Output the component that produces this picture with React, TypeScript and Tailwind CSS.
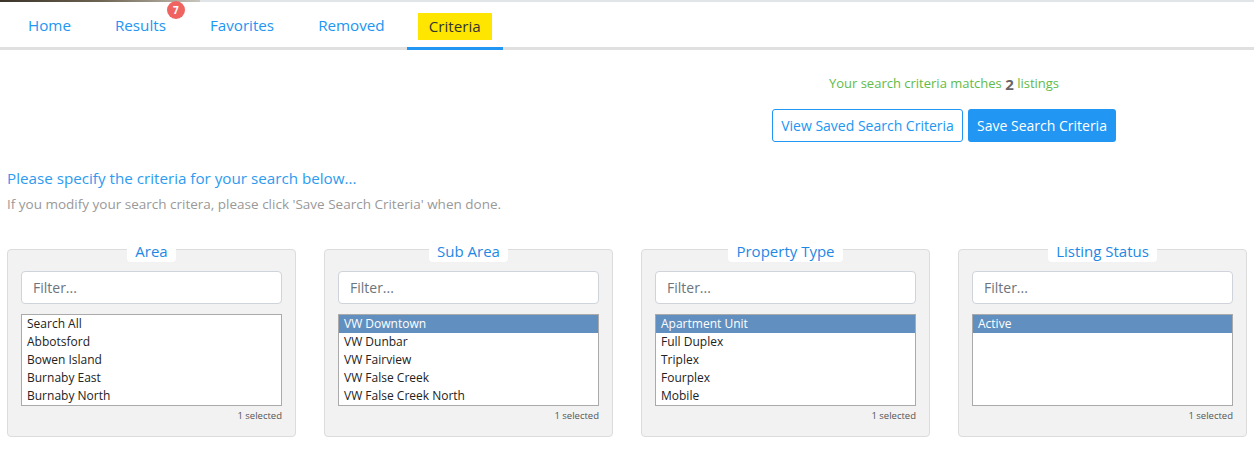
import React from "react";

interface Panel {
  title: string;
  options: string[];
  selected: number;
}

const panels: Panel[] = [
  { title: "Area", options: ["Search All", "Abbotsford", "Bowen Island", "Burnaby East", "Burnaby North"], selected: -1 },
  { title: "Sub Area", options: ["VW Downtown", "VW Dunbar", "VW Fairview", "VW False Creek", "VW False Creek North"], selected: 0 },
  { title: "Property Type", options: ["Apartment Unit", "Full Duplex", "Triplex", "Fourplex", "Mobile"], selected: 0 },
  { title: "Listing Status", options: ["Active"], selected: 0 },
];

const tabs = ["Home", "Results", "Favorites", "Removed"];

function CriteriaPanel({ panel }: { panel: Panel }) {
  return (
    <div className="w-[289px] border border-[#dcdcdc] bg-[#f2f2f2] rounded-[4px] px-[13px] pb-[14px]">
      {/* legend sitting on the top border */}
      <div className="flex justify-center -mt-[10px]">
        <span className="bg-white rounded-[4px] px-[8px] h-[22px] leading-[22px] text-[15px] text-[#1e88e5]">
          {panel.title}
        </span>
      </div>
      <div className="mt-[9px] h-[33px] bg-white border border-[#ced4da] rounded-[4px] pl-[11px] flex items-center text-[14px] text-[#6c757d]">
        Filter...
      </div>
      <div className="mt-[10px] h-[92px] bg-white border border-[#aaaaaa] overflow-hidden">
        {panel.options.map((opt, i) => (
          <div
            key={opt}
            className={`h-[18px] leading-[18px] pl-[5px] text-[12px] ${
              i === panel.selected ? "bg-[#6190c0] text-white" : "text-[#222]"
            }`}
          >
            {opt}
          </div>
        ))}
      </div>
      <div className="mt-[3px] h-[13px] leading-[13px] text-right text-[9.5px] text-[#555]">1 selected</div>
    </div>
  );
}

export default function App() {
  return (
    <div className="w-[1254px] h-[465px] bg-white overflow-hidden font-['Open_Sans',sans-serif]">
      {/* thin strip from the header image */}
      <div className="flex h-[2px]">
        <div className="w-[200px] bg-gradient-to-r from-[#3b342a] via-[#6d6350] to-[#c9c6bd]" />
        <div className="flex-1 bg-[#e2e5e8]" />
      </div>

      {/* tabs */}
      <div className="flex h-[48px] pl-[6px] border-b-[3px] border-[#e0e0e0]">
        {tabs.map((t) => (
          <div key={t} className="px-[22px] flex items-center pt-[2px] text-[15.2px] text-[#2196f3]">
            <span className="relative">
              {t}
              {t === "Results" && (
                <span className="absolute left-[52px] -top-[13px] w-[18px] h-[18px] rounded-full bg-[#ef6461] text-white text-[10px] font-bold flex items-center justify-center">
                  7
                </span>
              )}
            </span>
          </div>
        ))}
        <div className="px-[11px] flex items-center border-b-[3px] border-[#2196f3] -mb-[3px] pt-[3px]">
          <span className="bg-[#ffe600] px-[11px] h-[27px] flex items-center text-[15.2px] text-[#333]">Criteria</span>
        </div>
      </div>

      {/* match count and buttons */}
      <div className="flex justify-end pr-[138px] mt-[24px]">
        <div className="flex flex-col items-center">
          <div className="h-[20px] flex items-center text-[13px] text-[#62bb46]">
            Your search criteria matches&nbsp;<span className="text-[15px] font-bold text-[#666]">2</span>&nbsp;listings
          </div>
          <div className="flex gap-[5px] mt-[15px]">
            <button className="w-[191px] h-[33px] border border-[#2196f3] rounded-[3px] bg-white text-[14px] text-[#2196f3]">
              View Saved Search Criteria
            </button>
            <button className="w-[148px] h-[33px] rounded-[3px] bg-[#2196f3] text-[14px] text-white">
              Save Search Criteria
            </button>
          </div>
        </div>
      </div>

      <div className="px-[7px] mt-[25px]">
        <div className="h-[22px] leading-[22px] text-[15.2px] text-[#2d9bf0]">
          Please specify the criteria for your search below...
        </div>
        <div className="mt-[6px] h-[18px] leading-[18px] text-[13.5px] text-[#999]">
          If you modify your search critera, please click 'Save Search Criteria' when done.
        </div>
      </div>

      <div className="flex gap-[28px] px-[7px] mt-[36px]">
        {panels.map((p) => (
          <CriteriaPanel key={p.title} panel={p} />
        ))}
      </div>
    </div>
  );
}
